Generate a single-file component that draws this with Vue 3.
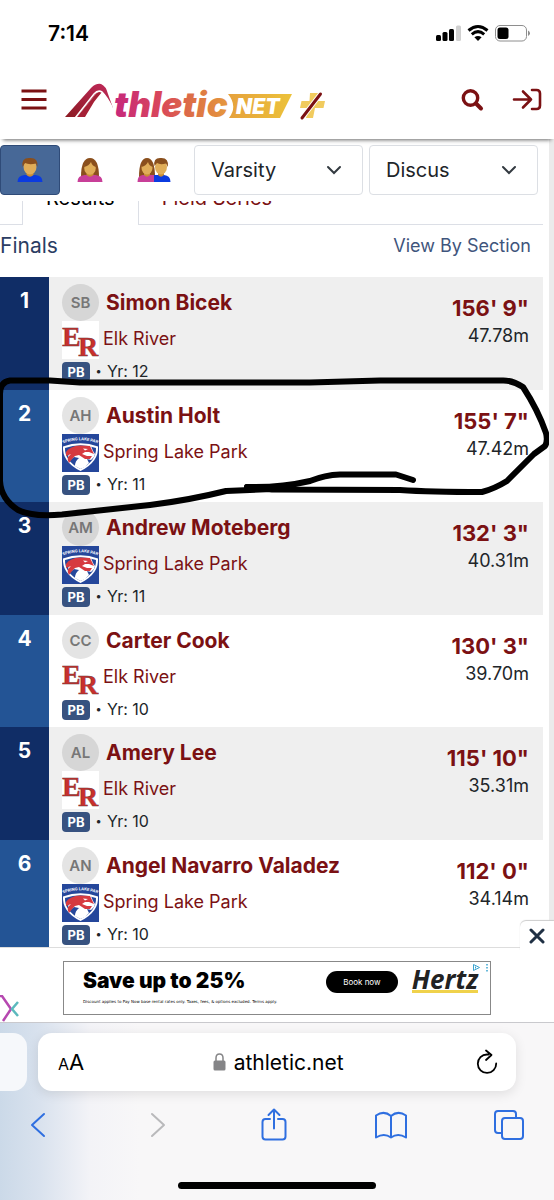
<script setup>
import { ref } from 'vue'

const gender = ref('men')
const division = ref('Varsity')
const event = ref('Discus')
const adOpen = ref(true)

const results = [
  { place: 1, initials: 'SB', name: 'Simon Bicek', team: 'Elk River', logo: 'er', year: 12, mark: '156\' 9"', metric: '47.78m' },
  { place: 2, initials: 'AH', name: 'Austin Holt', team: 'Spring Lake Park', logo: 'slp', year: 11, mark: '155\' 7"', metric: '47.42m' },
  { place: 3, initials: 'AM', name: 'Andrew Moteberg', team: 'Spring Lake Park', logo: 'slp', year: 11, mark: '132\' 3"', metric: '40.31m' },
  { place: 4, initials: 'CC', name: 'Carter Cook', team: 'Elk River', logo: 'er', year: 10, mark: '130\' 3"', metric: '39.70m' },
  { place: 5, initials: 'AL', name: 'Amery Lee', team: 'Elk River', logo: 'er', year: 10, mark: '115\' 10"', metric: '35.31m' },
  { place: 6, initials: 'AN', name: 'Angel Navarro Valadez', team: 'Spring Lake Park', logo: 'slp', year: 10, mark: '112\' 0"', metric: '34.14m' }
]
</script>

<template>
  <div class="phone">
    <div class="status">
      <span class="time">7:14</span>
      <svg class="status-icons" width="96" height="18" viewBox="0 0 96 18">
        <rect x="1" y="11" width="5" height="6" rx="1.5" />
        <rect x="7.5" y="8" width="5" height="9" rx="1.5" />
        <rect x="14" y="5" width="5" height="12" rx="1.5" />
        <rect x="21" y="1.5" width="5" height="15.5" rx="1.5" fill="#d0d0d0" />
        <g fill="none" stroke="#000" stroke-width="3">
          <path d="M33.5 6.5Q43 -1.5 52.5 6.5" />
          <path d="M36.8 10.3Q43 5 49.2 10.3" />
        </g>
        <path d="M43 17l-3.6-3.7q3.6-2.8 7.2 0z" />
        <rect x="60.5" y="1.5" width="31" height="15.5" rx="4.5" fill="none" stroke="#8e8e8e" />
        <rect x="62.5" y="3.5" width="11" height="11.5" rx="2.5" />
        <path d="M93 6.5q2 1 2 2.8t-2 2.7z" fill="#8e8e8e" />
      </svg>
    </div>

    <header class="header">
      <button class="icon-btn" aria-label="Menu">
        <svg width="26" height="24" viewBox="0 0 26 24" stroke="#7b1113" stroke-width="3">
          <path d="M0.5 3h25M0.5 11.5h25M0.5 20h25" />
        </svg>
      </button>
      <a class="brand" href="#" aria-label="Athletic.net">
        <svg width="264" height="44" viewBox="0 0 264 44">
          <defs>
            <linearGradient id="wing" x1="0" y1="1" x2="1" y2="0">
              <stop offset="0" stop-color="#8b1a22" />
              <stop offset="1" stop-color="#c22a5c" />
            </linearGradient>
            <linearGradient id="word" gradientUnits="userSpaceOnUse" x1="50" y1="0" x2="165" y2="0">
              <stop offset="0" stop-color="#c6287b" />
              <stop offset="0.4" stop-color="#d9475a" />
              <stop offset="0.7" stop-color="#dd7444" />
              <stop offset="1" stop-color="#e69b3e" />
            </linearGradient>
            <linearGradient id="net" x1="0" y1="0" x2="1" y2="0">
              <stop offset="0" stop-color="#e6a13c" />
              <stop offset="1" stop-color="#ecc23a" />
            </linearGradient>
          </defs>
          <path d="M0 37L26 8Q31 3 36 4Q41 6 43 14L48 28L43 20Q38 11 35 11Q33 11 30 15L12 37z" fill="url(#wing)" />
          <path d="M12 37L30 15Q33 10 37 12Q32 18 29 22L20 37z" fill="#a52036" />
          <path d="M10.5 37.5L29 14Q33 9.500 37 12Q42 17 47 27" fill="none" stroke="#fff" stroke-width="1.5" />
          <text class="logo-word" x="49" y="37">thletic</text>
          <path d="M163 14H227L215 38H164Q173 26 163 14z" fill="url(#net)" />
          <text class="logo-net" x="171" y="34">NET</text>
          <path d="M245 13h8l-1.5 8h8.500l-1.5 7h-8.500l-2 10h-7l2-10h-8l1.5-7h8z" fill="#f1cb5e" />
          <path d="M255.500 14L237 38" stroke="#fff" stroke-width="5" />
          <path d="M255.500 14L237 38" stroke="#7b1113" stroke-width="3" stroke-linecap="round" />
        </svg>
      </a>
      <button class="icon-btn" aria-label="Search">
        <svg width="24" height="24" viewBox="0 0 24 24" fill="none" stroke="#7b1113">
          <circle cx="9.500" cy="10" r="7.2" stroke-width="3.400" />
          <path d="M15 15.500l5 5" stroke-width="4" stroke-linecap="round" />
        </svg>
      </button>
      <button class="icon-btn login" aria-label="Log in">
        <svg width="30" height="24" viewBox="0 0 30 24" fill="none" stroke="#7b1113" stroke-width="2.600" stroke-linecap="round" stroke-linejoin="round">
          <path d="M2 11.500h17M11 3.500l8 8-8 8M20 2h4.500q3.500 0 3.500 3.500v12q0 3.500-3.500 3.500H20" />
        </svg>
      </button>
    </header>

    <main class="page">
      <div class="filters">
        <button class="gender" :class="{ active: gender === 'men' }" aria-label="Men" @click="gender = 'men'">
          <svg width="26" height="26" viewBox="0 0 26 26">
            <path d="M0.5 25q0-6.500 7-7h11q7 0.5 7 7z" fill="#0b3be0" />
            <path d="M9.500 13h7v5q-3.500 3.500-7 0z" fill="#c98e35" />
            <ellipse cx="13" cy="10" rx="6.500" ry="7.500" fill="#e0ad58" />
            <path d="M5.500 10Q4 1 12 1Q21.500 0 20.500 10L19 6.500Q12 8 8 6Z" fill="#8a4f1d" />
          </svg>
        </button>
        <button class="gender" :class="{ active: gender === 'women' }" aria-label="Women" @click="gender = 'women'">
          <svg width="26" height="26" viewBox="0 0 26 26">
            <path d="M4 20Q4 1 13 1T22 20z" fill="#8a4f1d" />
            <path d="M0.5 25q0-6.500 7-7h11q7 0.5 7 7z" fill="#c83f98" />
            <path d="M9.500 13h7v5q-3.500 3.500-7 0z" fill="#c98e35" />
            <ellipse cx="13" cy="11" rx="5.800" ry="6.800" fill="#e0ad58" />
            <path d="M7 10Q8 3 13 3T19 10Q15 9 14 5Q12 9 7 10z" fill="#8a4f1d" />
          </svg>
        </button>
        <button class="gender wide" :class="{ active: gender === 'all' }" aria-label="Men and women" @click="gender = 'all'">
          <svg width="34" height="26" viewBox="0 0 34 26">
            <path d="M2 20Q2 1 10 1T18 20z" fill="#8a4f1d" />
            <path d="M0.5 25q0-6.500 5-7h12v7z" fill="#c83f98" />
            <path d="M17 25v-7h10q6.500 0.5 6.500 7z" fill="#0b3be0" />
            <path d="M7 13h6v5q-3 3.500-6 0zM21 13h6v5q-3 3.500-6 0z" fill="#c98e35" />
            <ellipse cx="10" cy="11" rx="5.500" ry="6.500" fill="#e0ad58" />
            <ellipse cx="24" cy="10" rx="6" ry="7.500" fill="#e0ad58" />
            <path d="M4.500 10Q5 3 10 3T16 10Q12 9 11 5Q9 9 4.500 10z" fill="#8a4f1d" />
            <path d="M17.500 9Q16 1 23 1Q32 0 31 10L29 6.500Q23 8 20 6Z" fill="#8a4f1d" />
          </svg>
        </button>
        <div class="select">
          <select v-model="division" aria-label="Division">
            <option>Varsity</option>
          </select>
          <svg width="16" height="10" viewBox="0 0 16 10"><path d="M2 2l6 6 6-6" /></svg>
        </div>
        <div class="select">
          <select v-model="event" aria-label="Event">
            <option>Discus</option>
          </select>
          <svg width="16" height="10" viewBox="0 0 16 10"><path d="M2 2l6 6 6-6" /></svg>
        </div>
      </div>

      <nav class="tabs">
        <span class="tab-edge"></span>
        <a class="tab current" href="#">Results</a>
        <a class="tab rest" href="#">Field Series</a>
      </nav>

      <div class="round">
        <h2>Finals</h2>
        <a href="#">View By Section</a>
      </div>

      <table>
        <tbody>
          <tr v-for="r in results" :key="r.place">
            <td class="place">{{ r.place }}</td>
            <td class="athlete">
              <div class="line">
                <span class="avatar">{{ r.initials }}</span>
                <a class="name" href="#">{{ r.name }}</a>
              </div>
              <div class="line team">
                <svg v-if="r.logo === 'er'" width="37" height="38" viewBox="0 0 37 38">
                  <rect width="37" height="38" fill="#fff" />
                  <text class="er" x="0" y="25">E</text>
                  <text class="er" x="16" y="35">R</text>
                </svg>
                <svg v-else width="37" height="38" viewBox="0 0 37 38">
                  <rect width="37" height="38" fill="#25479b" />
                  <path :id="'arc' + r.place" d="M1 9.500Q18.500 3 36 9.500" fill="none" />
                  <text class="slp"><textPath :href="'#arc' + r.place">SPRING LAKE PARK</textPath></text>
                  <path d="M1 12.500Q18.500 6 36 12.500Q37 28 18.500 37Q0 28 1 12.500z" fill="#fff" />
                  <path d="M3 14Q18.500 8.500 34 14Q34.500 27 18.500 35Q2.500 27 3 14z" fill="#25479b" />
                  <path d="M7 27Q5 23 7 20Q12 12 23 12L29 12L31 17L33 20L32 23L29 26L25 25L27 29L23 33L18.500 35L13 32Q13 27 17 24L12 23z" fill="#fff" />
                  <path d="M4 18Q8 12 18 11.500L28 12L30 16L32 20L27 18L23 18L20 20L25 22L30 22L28 25L23 25L17 21L13 22L10 25L7 29Q5 26 6 23L9 20L4 22z" fill="#d63a40" />
                  <path d="M21 14.500l5 0.5-3 1.500z" fill="#fff" />
                </svg>
                <a href="#">{{ r.team }}</a>
              </div>
              <div class="line info">
                <span class="badge">PB</span>
                <span class="dot">•</span>
                <span>Yr: {{ r.year }}</span>
              </div>
            </td>
            <td class="marks">
              <a href="#">{{ r.mark }}</a>
              <span>{{ r.metric }}</span>
            </td>
          </tr>
        </tbody>
      </table>

      <svg class="scribble" viewBox="0 0 554 150" fill="none" stroke="#000" stroke-width="6" stroke-linecap="round" stroke-linejoin="round">
        <path d="M247 114Q280 115 310 108Q325 102 340 101.500H396L413 107" />
        <path d="M247 114L272 116.500L400 117Q430 119 482 119Q494 116 507 108L534 81L545 73Q548 68 546 60Q538 37 523 14Q512 7 502 7.500H380L310 9.500H80L50 7.500H10Q0 9 0 21V108Q1 126 18 137Q32 144 62 141.500L150 132Q190 127 226 118L272 116" />
      </svg>
    </main>

    <aside v-if="adOpen" class="ad-bar">
      <button class="ad-close" aria-label="Close ad" @click="adOpen = false">
        <svg width="16" height="16" viewBox="0 0 16 16"><path d="M2 2l12 12M14 2L2 14" stroke="#1f3044" stroke-width="3" stroke-linecap="round" /></svg>
      </button>
      <svg class="ad-mark" width="19" height="27" viewBox="0 0 19 27" fill="none" stroke-width="2.500">
        <path d="M0 1h2l9 13-8 12" stroke="#b648b0" />
        <path d="M18 7l-6 7 6 7" stroke="#5cb9bd" />
      </svg>
      <div class="ad">
        <div class="ad-text">
          <strong>Save up to 25%</strong>
          <small>Discount applies to Pay Now base rental rates only. Taxes, fees, &amp; options excluded. Terms apply.</small>
        </div>
        <button class="book">Book now</button>
        <span class="hertz">Hertz</span>
        <svg class="choices" width="18" height="9" viewBox="0 0 18 9" fill="none" stroke="#3aa4d0">
          <path d="M1.5 1.5l6 3-6 3zM3.500 3.500v2" />
          <path d="M15 1v1.5M15 4v1.5M15 7v1.5" stroke-width="1.5" />
        </svg>
      </div>
    </aside>

    <footer class="browser">
      <div class="address-row">
        <div class="prev-tab"></div>
        <div class="address">
          <button class="aa" aria-label="Page settings"><small>A</small>A</button>
          <div class="url">
            <svg width="13" height="18" viewBox="0 0 13 18">
              <rect x="0.5" y="7.5" width="12" height="10" rx="1.5" fill="#858587" />
              <path d="M3 8V5Q3 1 6.500 1T10 5V8" fill="none" stroke="#858587" stroke-width="1.5" />
            </svg>
            <span>athletic.net</span>
          </div>
          <button class="reload" aria-label="Reload">
            <svg width="22" height="26" viewBox="0 0 22 26" fill="none" stroke="#000" stroke-width="1.800" stroke-linecap="round" stroke-linejoin="round">
              <path d="M12.500 5.500H11A9.200 9.200 0 1 0 20.200 14.500M10 1.5l5.500 4.500-5.500 5" />
            </svg>
          </button>
        </div>
      </div>
      <div class="toolbar">
        <button aria-label="Back">
          <svg width="32" height="34" viewBox="0 0 32 34"><path d="M22 6L10 17l12 11" /></svg>
        </button>
        <button class="off" aria-label="Forward" disabled>
          <svg width="32" height="34" viewBox="0 0 32 34"><path d="M12 6l12 11-12 11" /></svg>
        </button>
        <button aria-label="Share">
          <svg width="32" height="34" viewBox="0 0 32 34"><path d="M12 11H7.500q-3 0-3 3v14.500q0 3 3 3h17q3 0 3-3V14q0-3-3-3H20M16 20.500V1.500M10.500 7L16 1.500 21.500 7" /></svg>
        </button>
        <button aria-label="Bookmarks">
          <svg width="32" height="34" viewBox="0 0 32 34"><path d="M16 8Q9 2 1 7.500V29.500Q9 24.500 16 29.500Q23 24.500 31 29.500V7.500Q23 2 16 8V29.500" /></svg>
        </button>
        <button aria-label="Tabs">
          <svg width="32" height="34" viewBox="0 0 32 34"><path d="M8 25H5q-3 0-3-3V6q0-3 3-3h15q3 0 3 3v3" /><rect x="9" y="10" width="21" height="21" rx="3" /></svg>
        </button>
      </div>
      <div class="home"></div>
    </footer>
  </div>
</template>

<style>
body {
  margin: 0;
  background: #fff;
}
</style>

<style scoped>
* {
  box-sizing: border-box;
}

button {
  padding: 0;
  border: 0;
  background: none;
  color: inherit;
  font: inherit;
  cursor: pointer;
}

a {
  color: #7b1113;
  text-decoration: none;
}

svg {
  display: block;
  flex: none;
}

.phone {
  display: flex;
  flex-direction: column;
  height: 100vh;
  overflow: hidden;
  font-family: Inter, "Liberation Sans", sans-serif;
  color: #212529;
}

.status {
  display: flex;
  justify-content: space-between;
  align-items: center;
  height: 66px;
  padding: 0 23px 0 48px;
}

.time {
  font-size: 21px;
  font-weight: 600;
  color: #000;
}

.header {
  position: relative;
  z-index: 2;
  display: flex;
  align-items: center;
  height: 73px;
  padding: 0 12px 6px 21px;
  background: #fff;
  box-shadow: 0 4px 4px -3px rgba(0, 0, 0, 0.6);
}

.brand {
  margin: 4px auto 0 18px;
}

.logo-word {
  font-size: 35px;
  font-weight: 900;
  font-style: italic;
  fill: url(#word);
}

.logo-net {
  font-size: 21px;
  font-weight: 900;
  font-style: italic;
  fill: #fff;
}

.login {
  margin-left: 27px;
}

.page {
  position: relative;
  flex: 1;
  min-height: 0;
  overflow: hidden;
  padding-right: 6px;
  border-right: 5px solid #ebebeb;
}

.filters {
  display: flex;
  padding: 6px 5px 6px 0;
}

.gender {
  display: flex;
  justify-content: center;
  align-items: center;
  width: 60px;
  height: 50px;
  border: 1px solid transparent;
  border-radius: 4px;
}

.gender.active {
  background: #476897;
  border-color: #2f4b78;
}

.gender.wide {
  width: 68px;
}

.select {
  flex: 1;
  display: flex;
  align-items: center;
  height: 50px;
  margin-left: 6px;
  border: 1px solid #dcdfe4;
  border-radius: 4px;
}

.select select {
  flex: 1;
  min-width: 0;
  height: 48px;
  margin-right: -36px;
  padding: 0 36px 0 16px;
  border: 0;
  background: none;
  appearance: none;
  font: 20px Inter, sans-serif;
  color: #212529;
}

.select svg {
  margin-right: 20px;
  fill: none;
  stroke: #333a40;
  stroke-width: 2;
  stroke-linecap: round;
  pointer-events: none;
}

.tabs {
  display: flex;
  align-items: flex-end;
  height: 24px;
  overflow: hidden;
  font-size: 20px;
  line-height: 54px;
}

.tab-edge {
  width: 23px;
  height: 54px;
  border: solid #dcdfe6;
  border-width: 0 1px 1px 0;
}

.tab {
  height: 54px;
  padding: 0 23px;
}

.tab.current {
  color: #000;
}

.tab.rest {
  flex: 1;
  border: solid #dcdfe6;
  border-width: 0 0 1px 1px;
}

.round {
  display: flex;
  justify-content: space-between;
  height: 52px;
  padding: 8px 12px 0 0;
  line-height: 26px;
}

.round h2 {
  margin: 0;
  font-size: 21px;
  font-weight: 400;
  color: #2b3d63;
}

.round a {
  font-size: 18px;
  color: #3f557c;
}

table {
  width: 100%;
  border-collapse: collapse;
}

tr {
  height: 112px;
}

tr:nth-child(odd) {
  height: 113px;
  background: #efefef;
}

td {
  padding: 0;
  vertical-align: top;
}

.place {
  width: 49px;
  padding-top: 12px;
  background: #235495;
  text-align: center;
  font-size: 21px;
  line-height: 24px;
  font-weight: 700;
  color: #fff;
}

tr:nth-child(odd) .place {
  background: #102d66;
}

.athlete {
  padding: 7px 0 0 13px;
}

.line {
  display: flex;
  align-items: center;
}

.avatar {
  width: 37px;
  height: 37px;
  margin-right: 7px;
  border-radius: 50%;
  background: #e4e4e4;
  text-align: center;
  font-size: 15px;
  line-height: 37px;
  font-weight: 600;
  color: #777;
}

tr:nth-child(odd) .avatar {
  background: #d6d6d6;
}

.name {
  font-size: 21px;
  font-weight: 700;
}

.team {
  gap: 4px;
  font-size: 18px;
  line-height: 36px;
}

.team a {
  padding-bottom: 2px;
}

.er {
  font-family: "Liberation Serif", serif;
  font-size: 28px;
  font-weight: 700;
  fill: #c9302c;
  stroke: #6d3434;
  stroke-width: 0.4;
}

.slp {
  font-size: 4px;
  font-weight: 700;
  fill: #fff;
}

.info {
  padding-top: 1px;
  font-size: 16px;
  line-height: 22px;
}

.badge {
  width: 28px;
  height: 20px;
  margin-top: 2px;
  border-radius: 4px;
  background: #375280;
  text-align: center;
  font-size: 13px;
  line-height: 20px;
  font-weight: 700;
  color: #fff;
}

.dot {
  width: 17px;
  text-align: center;
  font-size: 11px;
}

.marks {
  padding: 17px 14px 0 0;
  text-align: right;
  font-size: 18px;
  line-height: 28px;
}

.marks a {
  display: block;
  font-size: 22px;
  font-weight: 700;
}

.scribble {
  position: absolute;
  top: 234px;
  left: 0;
  width: calc(100% + 5px);
  overflow: visible;
  pointer-events: none;
}

.ad-bar {
  position: relative;
  height: 75px;
  padding: 13px 63px 0;
  background: #fff;
  border-top: 1px solid #ddd;
}

.ad-close {
  position: absolute;
  right: 0;
  top: -27px;
  display: flex;
  justify-content: center;
  align-items: center;
  width: 34px;
  height: 30px;
  background: #fff;
  border-radius: 6px 0 0;
  box-shadow: 0 -1px 1px #ccc;
}

.ad-mark {
  position: absolute;
  left: 0;
  bottom: 0;
}

.ad {
  position: relative;
  display: flex;
  height: 54px;
  padding: 0 12px 0 19px;
  border: 1px solid #888;
  color: #000;
}

.ad-text {
  flex: 1;
}

.ad strong {
  display: block;
  padding-top: 5px;
  font-size: 21px;
  line-height: 28px;
  font-weight: 900;
}

.ad small {
  display: block;
  font-family: "DejaVu Sans", sans-serif;
  font-size: 4px;
  line-height: 14px;
  white-space: nowrap;
}

.book {
  width: 72px;
  height: 22px;
  margin: 9px 14px 0 0;
  border-radius: 11px;
  background: #000;
  font-size: 8px;
  color: #fff;
}

.hertz {
  height: 24px;
  margin-top: 7px;
  border-bottom: 3px solid #f0d24b;
  font-family: "Open Sans", sans-serif;
  font-size: 26px;
  line-height: 20px;
  font-weight: 700;
  font-style: italic;
  color: #222;
}

.choices {
  position: absolute;
  top: 1px;
  right: 0;
}

.browser {
  height: 178px;
  padding-top: 10px;
  border-top: 1px solid #c9c9cd;
  background: linear-gradient(90deg, #cbd9e8 0, #d9e2ee 40px, #f3f3f7 90px, #f8f7f8 140px);
}

.address-row {
  display: flex;
  gap: 11px;
  padding-right: 38px;
}

.prev-tab {
  width: 27px;
  height: 58px;
  border-radius: 0 14px 14px 0;
  background: #f6f8fb;
}

.address {
  flex: 1;
  display: flex;
  justify-content: space-between;
  align-items: center;
  height: 58px;
  padding: 0 18px 0 20px;
  border-radius: 14px;
  background: #fff;
  box-shadow: 0 3px 12px rgba(0, 0, 0, 0.1);
  color: #000;
}

.aa {
  font-size: 22px;
}

.aa small {
  font-size: 16px;
}

.url {
  display: flex;
  align-items: center;
  gap: 8px;
  margin-right: 4px;
  font-size: 21px;
}

.toolbar {
  display: flex;
  justify-content: space-between;
  padding: 17px 29px 0 22px;
}

.toolbar svg {
  fill: none;
  stroke: #2f6fe0;
  stroke-width: 2;
  stroke-linecap: round;
  stroke-linejoin: round;
}

.toolbar .off svg {
  stroke: #b9b9bb;
}

.home {
  width: 198px;
  height: 7px;
  margin: 40px auto 0;
  border-radius: 4px;
  background: #000;
}
</style>
